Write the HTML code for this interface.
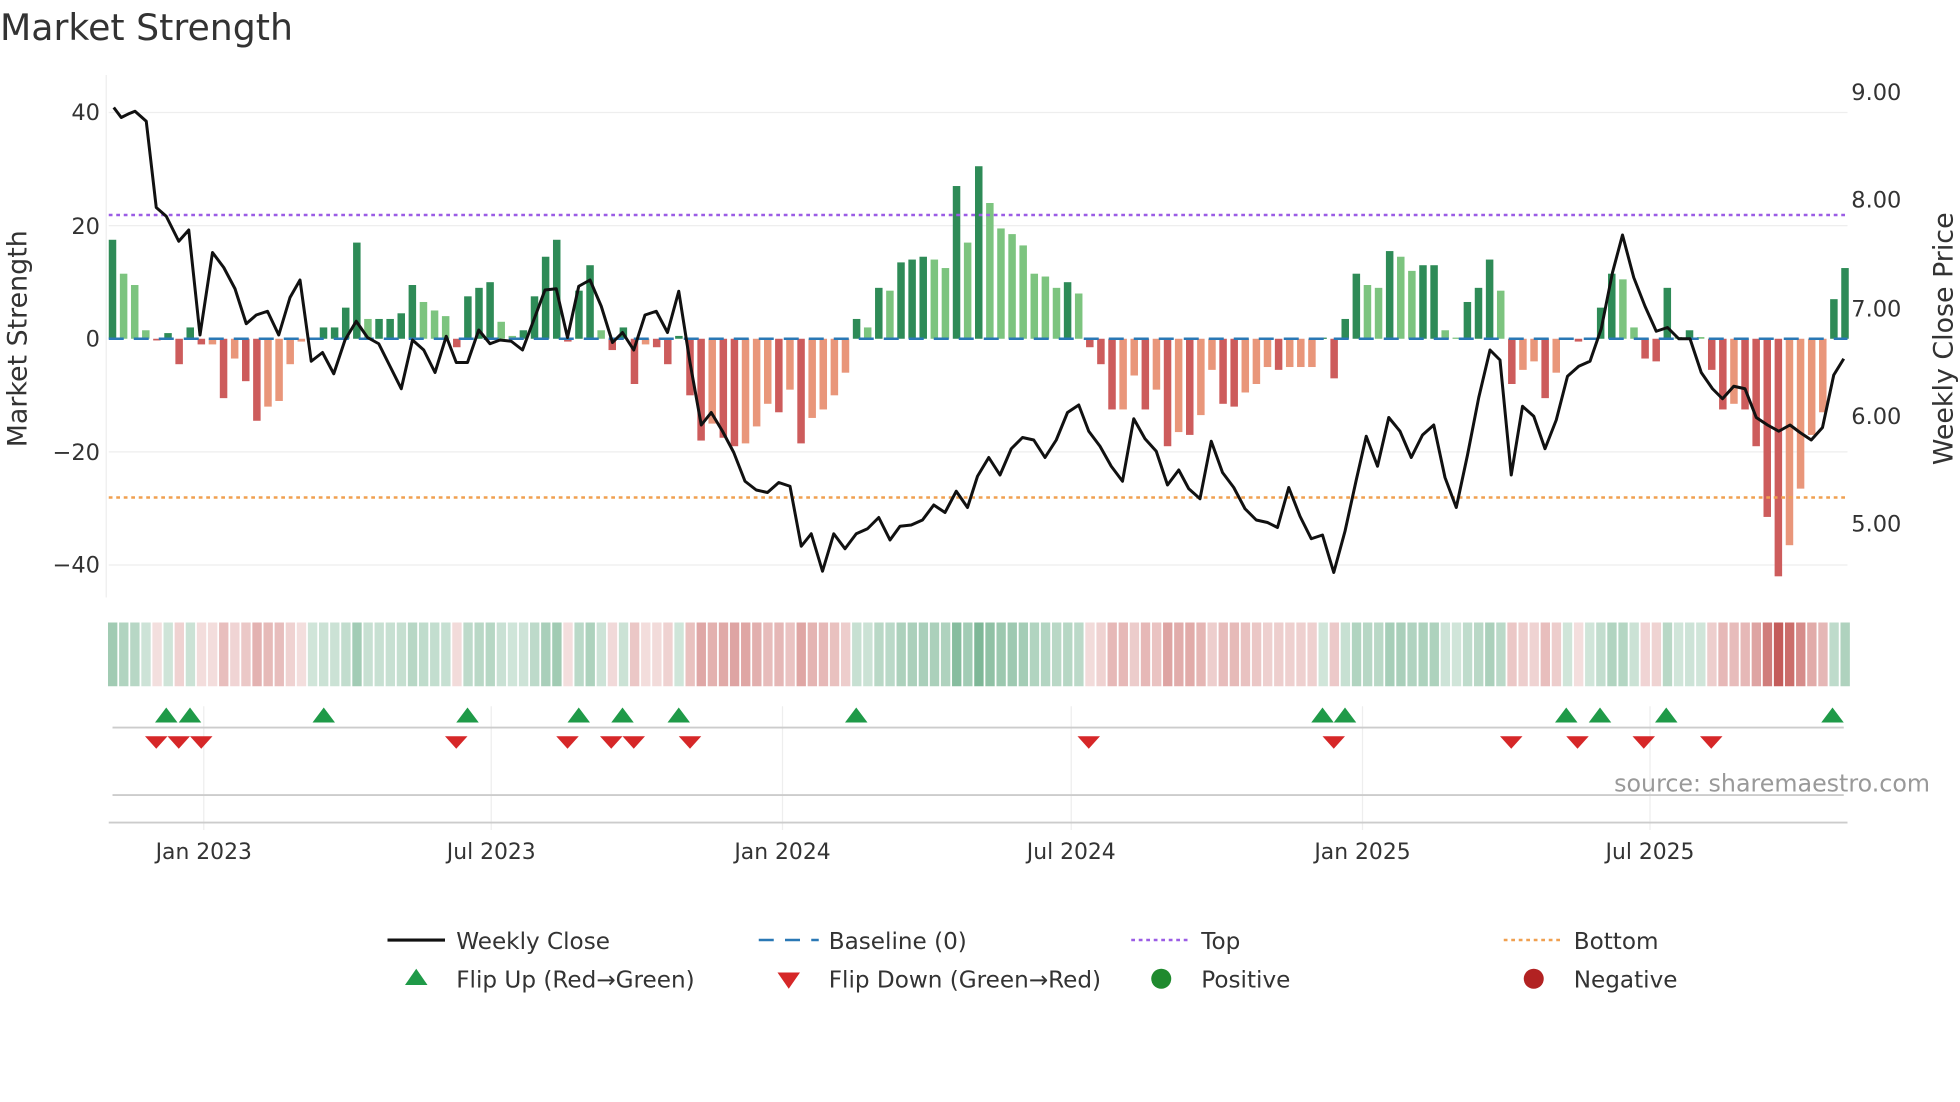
<!DOCTYPE html>
<html><head><meta charset="utf-8"><style>
html,body{margin:0;padding:0;background:#fff;width:1960px;height:1102px;overflow:hidden}
svg{display:block;font-family:"DejaVu Sans","Liberation Sans",sans-serif}
</style></head><body>
<svg id="s" width="1960" height="1102" viewBox="0 0 1568 881.6" xmlns="http://www.w3.org/2000/svg">
<text x="0" y="32" font-size="29" fill="#333">Market Strength</text>
<g stroke="#eee" stroke-width="1">
<line x1="87" x2="1478" y1="90" y2="90"/><line x1="87" x2="1478" y1="180.5" y2="180.5"/>
<line x1="87" x2="1478" y1="361.5" y2="361.5"/><line x1="87" x2="1478" y1="452" y2="452"/>
<line x1="85" x2="85" y1="60" y2="478"/>
</g>
<g id="grid2" stroke="#eee" stroke-width="1"></g>
<g id="bars"></g>
<line x1="87" x2="1478" y1="271" y2="271" stroke="#2a78b5" stroke-width="2" stroke-dasharray="12,8"/>
<line x1="87" x2="1478" y1="172" y2="172" stroke="#9b5de5" stroke-width="2" stroke-dasharray="3,3"/>
<line x1="87" x2="1478" y1="398" y2="398" stroke="#f0a050" stroke-width="2" stroke-dasharray="3,3"/>
<polyline id="price" fill="none" stroke="#111" stroke-width="2.4" stroke-linejoin="round"/>
<g font-size="18" fill="#333">
<text x="80" y="96" text-anchor="end">40</text><text x="80" y="187" text-anchor="end">20</text>
<text x="80" y="277" text-anchor="end">0</text><text x="80" y="368" text-anchor="end">−20</text>
<text x="80" y="458" text-anchor="end">−40</text>
<text x="1481" y="80">9.00</text><text x="1481" y="166">8.00</text><text x="1481" y="253">7.00</text>
<text x="1481" y="339">6.00</text><text x="1481" y="425">5.00</text>
</g>
<text transform="translate(21,271) rotate(-90)" text-anchor="middle" font-size="21.5" fill="#333">Market Strength</text>
<text transform="translate(1562,271) rotate(-90)" text-anchor="middle" font-size="21.5" fill="#333">Weekly Close Price</text>
<g id="heat"></g>
<line x1="90" x2="1475" y1="582" y2="582" stroke="#ccc" stroke-width="1.5"/>
<line x1="90" x2="1475" y1="636" y2="636" stroke="#ccc" stroke-width="1.5"/>
<line x1="87" x2="1478" y1="658" y2="658" stroke="#ccc" stroke-width="1.5"/>
<g id="marks"></g>
<text x="1544" y="633" text-anchor="end" font-size="19" fill="#999">source: sharemaestro.com</text>
<g font-size="17.5" fill="#333" text-anchor="middle">
<text x="163" y="687">Jan 2023</text><text x="393" y="687">Jul 2023</text><text x="626" y="687">Jan 2024</text>
<text x="857" y="687">Jul 2024</text><text x="1090" y="687">Jan 2025</text><text x="1320" y="687">Jul 2025</text>
</g>
<g font-size="18.5" fill="#333">
<line x1="310" x2="356" y1="752" y2="752" stroke="#111" stroke-width="2.5"/>
<text x="365" y="759">Weekly Close</text>
<line x1="607" x2="655" y1="752" y2="752" stroke="#2a78b5" stroke-width="2" stroke-dasharray="12,9"/>
<text x="663" y="759">Baseline (0)</text>
<line x1="905" x2="951" y1="752" y2="752" stroke="#9b5de5" stroke-width="2" stroke-dasharray="3,3"/>
<text x="961" y="759">Top</text>
<line x1="1203" x2="1249" y1="752" y2="752" stroke="#f0a050" stroke-width="2" stroke-dasharray="3,3"/>
<text x="1259" y="759">Bottom</text>
<polygon points="324,788 342,788 333,775" fill="#1f9a48"/>
<text x="365" y="790">Flip Up (Red→Green)</text>
<polygon points="622,778 640,778 631,791" fill="#d62728"/>
<text x="663" y="790">Flip Down (Green→Red)</text>
<circle cx="929" cy="783" r="8" fill="#1f8a2e"/>
<text x="961" y="790">Positive</text>
<circle cx="1227" cy="783" r="8" fill="#b22222"/>
<text x="1259" y="790">Negative</text>
</g>
</svg>
<script>
var NS="http://www.w3.org/2000/svg";
function el(p,t,a){var e=document.createElementNS(NS,t);for(var k in a)e.setAttribute(k,a[k]);document.getElementById(p).appendChild(e);return e;}
var v=[17.5,11.5,9.5,1.5,-0.3,1,-4.5,2,-1,-1,-10.5,-3.5,-7.5,-14.5,-12,-11,-4.5,-0.5,0.2,2,2,5.5,17,3.5,3.5,3.5,4.5,9.5,6.5,5,4,-1.5,7.5,9,10,3,0.5,1.5,7.5,14.5,17.5,-0.5,8.5,13,1.5,-2,2,-8,-1,-1.5,-4.5,0.5,-10,-18,-15,-17.5,-19,-18.5,-15.5,-11.5,-13,-9,-18.5,-14,-12.5,-10,-6,3.5,2,9,8.5,13.5,14,14.5,14,12.5,27,17,30.5,24,19.5,18.5,16.5,11.5,11,9,10,8,-1.5,-4.5,-12.5,-12.5,-6.5,-12.5,-9,-19,-16.5,-17,-13.5,-5.5,-11.5,-12,-9.5,-8,-5,-5.5,-5,-5,-5,0.2,-7,3.5,11.5,9.5,9,15.5,14.5,12,13,13,1.5,0.2,6.5,9,14,8.5,-8,-5.5,-4,-10.5,-6,0.2,-0.5,0.2,5.5,11.5,10.5,2,-3.5,-4,9,0.3,1.5,0.3,-5.5,-12.5,-11.5,-12.5,-19,-31.5,-42,-36.5,-26.5,-17,-13,7,12.5];
var x0=90,dx=(1476-90)/(v.length-1),sc=90.5/20;
for(var i=0;i<v.length;i++){
 var x=x0+dx*i,val=v[i],p=i?v[i-1]:0,c;
 if(val>=0)c=(val>=p)?"#2e8b57":"#7cc47f"; else c=(val<p)?"#cd5c5c":"#e9967a";
 var h=Math.abs(val)*sc;
 el("bars","rect",{x:x-3,y:val>=0?271-h:271,width:6,height:Math.max(h,1),fill:c});
 var a=Math.min(1,Math.abs(val)/42), hc;
 if(val>=0){hc="rgba(46,139,87,"+(0.22+0.55*a)+")";}else{hc="rgba(192,80,77,"+(0.18+0.75*a)+")";}
 el("heat","rect",{x:x-3.6,y:498,width:dx-1.4,height:51,fill:hc});
}
var pts=[[91,86],[97,94],[103,91],[108,89],[117,97],[125,166],[133,173],[143,193],[151,184],[160,268],[170,202],[179,214],[188,231],[197,259],[205,252],[214,249],[223,268],[232,238],[240,224],[249,289],[258,282],[267,299],[276,272],[285,257],[294,270],[303,275],[312,293],[321,311],[330,272],[339,280],[348,298],[357,269],[365,290],[374,290],[383,264],[392,275],[400,272],[409,273],[418,280],[427,256],[436,232],[445,231],[454,270],[463,229],[472,224],[481,245],[490,274],[498,266],[507,280],[516,252],[525,249],[534,266],[543,233],[552,290],[561,340],[569,330],[578,345],[587,362],[596,385],[605,392],[614,394],[623,386],[632,389],[641,437],[649,427],[658,457],[667,427],[676,439],[685,427],[694,423],[703,414],[712,432],[720,421],[729,420],[738,416],[747,404],[756,410],[765,393],[774,406],[782,381],[791,366],[800,380],[809,359],[818,350],[827,352],[836,366],[845,352],[854,330],[863,324],[871,345],[880,357],[889,373],[898,385],[907,335],[916,351],[925,361],[934,388],[943,376],[951,391],[960,399],[969,353],[978,378],[987,390],[996,407],[1005,416],[1014,418],[1022,422],[1031,390],[1040,413],[1049,431],[1058,428],[1067,458],[1076,425],[1085,384],[1093,349],[1102,373],[1111,334],[1120,345],[1129,366],[1138,348],[1147,340],[1156,382],[1165,406],[1174,364],[1183,318],[1192,280],[1200,288],[1209,380],[1218,325],[1227,333],[1236,359],[1245,336],[1254,301],[1263,293],[1272,289],[1281,263],[1290,218],[1298,188],[1307,222],[1316,245],[1325,265],[1334,262],[1343,271],[1352,271],[1361,298],[1370,311],[1378,319],[1387,309],[1396,311],[1405,334],[1414,340],[1423,345],[1432,340],[1440,346],[1449,352],[1458,342],[1467,300],[1475,287]];
document.getElementById("price").setAttribute("points",pts.map(function(p){return p.join(",")}).join(" "));
[163,393,626,857,1090,1320].forEach(function(x){el("grid2","line",{x1:x,x2:x,y1:565,y2:664});});
[133,152,259,374,463,498,543,685,1058,1076,1253,1280,1333,1466].forEach(function(x){el("marks","polygon",{points:(x-9)+",578 "+(x+9)+",578 "+x+",566",fill:"#1f9a48"});});
[125,143,161,365,454,489,507,552,871,1067,1209,1262,1315,1369].forEach(function(x){el("marks","polygon",{points:(x-9)+",589 "+(x+9)+",589 "+x+",599",fill:"#d62728"});});
</script>
</body></html>
